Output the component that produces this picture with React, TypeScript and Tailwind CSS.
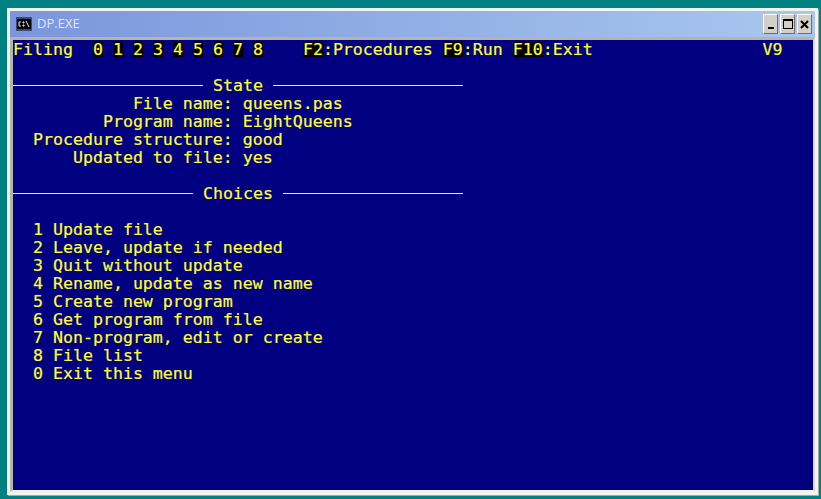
const state = [
  "            File name: queens.pas",
  "         Program name: EightQueens",
  "  Procedure structure: good",
  "      Updated to file: yes",
]

const choices = [
  "  1 Update file",
  "  2 Leave, update if needed",
  "  3 Quit without update",
  "  4 Rename, update as new name",
  "  5 Create new program",
  "  6 Get program from file",
  "  7 Non-program, edit or create",
  "  8 File list",
  "  0 Exit this menu",
]

function Key({ children }: { children: string }) {
  return <span className="inline-block h-[16px] bg-black align-top">{children}</span>
}

function Rule({ left, title }: { left: string; title: string }) {
  return (
    <div className="flex h-[18px] w-[450px] items-center">
      <div className={`relative -top-[1px] h-px bg-[#ffff33] ${left}`} />
      <span className="px-[10px]">{title}</span>
      <div className="relative -top-[1px] h-px flex-1 bg-[#ffff33]" />
    </div>
  )
}

function CaptionButton({ children }: { children: React.ReactNode }) {
  return (
    <div className="flex h-[20px] w-[15px] items-center justify-center border border-t-white border-l-white border-r-[#6f6f6a] border-b-[#6f6f6a] bg-[#d4d0c8]">
      {children}
    </div>
  )
}

export default function App() {
  return (
    <div className="h-[499px] w-[821px] overflow-hidden bg-[#008080] pl-[7px] pt-[8px]">
      {/* Window frame */}
      <div className="h-[487px] w-[811px] border-[3px] border-[#f4f4ee] shadow-[1px_1px_0_#a8a89c]">
        {/* Title bar */}
        <div className="flex h-[26px] items-center bg-gradient-to-r from-[#7b96dc] to-[#a9c7ee] pl-[6px] pr-[3px]">
          <svg width="16" height="14" viewBox="0 0 16 14" className="mr-[5px]">
            <rect x="0" y="0" width="16" height="14" fill="#3a4a78" />
            <rect x="1" y="2" width="14" height="10" fill="#000000" />
            <path d="M5 5H3V9H5M7 5H8V6H7ZM7 8H8V9H7ZM10 4L13 10" fill="none" stroke="#e8e8e8" strokeWidth="1" />
          </svg>
          <span className="font-['Open_Sans',sans-serif] text-[13px] text-[#dfe6f7]">DP.EXE</span>
          <div className="ml-auto flex items-center gap-[2px]">
            <CaptionButton>
              <div className="mt-[8px] h-[2px] w-[6px] bg-black" />
            </CaptionButton>
            <CaptionButton>
              <div className="h-[10px] w-[10px] border border-t-2 border-black" />
            </CaptionButton>
            <CaptionButton>
              <svg width="9" height="9" viewBox="0 0 9 9">
                <path d="M1 1L8 8M8 1L1 8" stroke="#000000" strokeWidth="2" fill="none" />
              </svg>
            </CaptionButton>
          </div>
        </div>

        {/* Console */}
        <div className="h-[455px] border-l-[3px] border-r-[2px] border-t-[3px] border-b-[2px] border-l-[#b8b4aa] border-r-[#dedad0] border-t-[#b8b4aa] border-b-[#f4f4ee] bg-[#000080]">
          <div className="whitespace-pre pt-[1px] font-['DejaVu_Sans_Mono',monospace] text-[16.6px] leading-[18px] text-[#ffff33] [-webkit-text-stroke:0.2px_#ffff33]">
            <div className="h-[18px]">
              {"Filing  "}
              <Key>0</Key> <Key>1</Key> <Key>2</Key> <Key>3</Key> <Key>4</Key> <Key>5</Key> <Key>6</Key> <Key>7</Key>{" "}
              <Key>8</Key>
              {"    "}
              <Key>F2</Key>
              {":Procedures "}
              <Key>F9</Key>
              {":Run "}
              <Key>F10</Key>
              {":Exit                 V9"}
            </div>
            <div className="h-[18px]" />
            <Rule left="w-[190px]" title="State" />
            {state.map((line) => (
              <div key={line}>{line}</div>
            ))}
            <div className="h-[18px]" />
            <Rule left="w-[180px]" title="Choices" />
            <div className="h-[18px]" />
            {choices.map((line) => (
              <div key={line}>{line}</div>
            ))}
          </div>
        </div>
      </div>
    </div>
  )
}
